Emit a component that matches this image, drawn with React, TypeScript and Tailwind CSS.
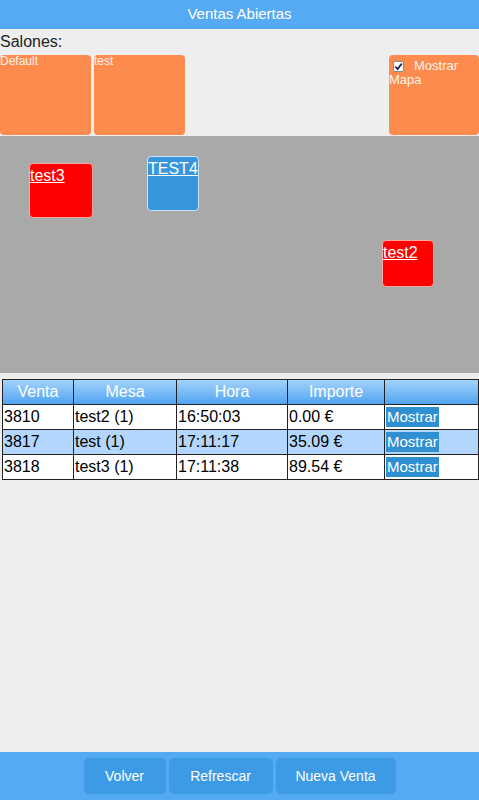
import React from "react";

const ventas = [
  { id: "3810", mesa: "test2 (1)", hora: "16:50:03", importe: "0.00 €", alt: false },
  { id: "3817", mesa: "test (1)", hora: "17:11:17", importe: "35.09 €", alt: true },
  { id: "3818", mesa: "test3 (1)", hora: "17:11:38", importe: "89.54 €", alt: false },
];

export default function App() {
  return (
    <div className="flex h-screen flex-col bg-[#eeeeee] font-['Liberation_Sans',Arial,sans-serif] text-black">
      <div className="flex h-[29px] items-center justify-center bg-[#55aaf4] text-[15px] text-white">
        Ventas Abiertas
      </div>

      <div className="pt-[4px] text-[16px] leading-[18px] text-[#222]">Salones:</div>

      <div className="mt-[4px] flex h-[80px]">
        <div className="w-[91px] rounded-[4px] bg-[#fd8b4d] text-[12px] leading-[13px] text-[#fff3e8]">Default</div>
        <div className="ml-[3px] w-[91px] rounded-[4px] bg-[#fd8b4d] text-[12px] leading-[13px] text-[#fff3e8]">test</div>
        <div className="flex-1" />
        <div className="w-[90px] rounded-[4px] bg-[#fd8b4d] pt-[4px] text-[13px] leading-[14px] text-[#fff3e8]">
          <span className="ml-[4px] mr-[10px] inline-flex h-[11px] w-[11px] items-center justify-center rounded-[2px] border border-[#888] bg-white align-[-1px]">
            <svg viewBox="0 0 10 10" className="h-[9px] w-[9px]">
              <path d="M1.5 5.2 L4 7.8 L8.6 1.8" fill="none" stroke="#1b2a4a" strokeWidth="2" />
            </svg>
          </span>
          Mostrar
          <br />
          Mapa
        </div>
      </div>

      <div className="relative mt-[1px] h-[237px] bg-[#a9a9a9]">
        <div className="absolute left-[29px] top-[27px] h-[55px] w-[64px] rounded-[4px] border border-[#f8a8a0] bg-[#ff0000]">
          <span className="text-[16px] leading-[17px] text-white underline">test3</span>
        </div>
        <div className="absolute left-[147px] top-[20px] h-[55px] w-[52px] rounded-[4px] border border-[#c8e4ff] bg-[#3796dc]">
          <span className="text-[16px] leading-[17px] text-white underline">TEST4</span>
        </div>
        <div className="absolute left-[382px] top-[104px] h-[47px] w-[52px] rounded-[4px] border border-[#f8a8a0] bg-[#ff0000]">
          <span className="text-[16px] leading-[17px] text-white underline">test2</span>
        </div>
      </div>

      <table className="ml-[2px] mt-[6px] w-[477px] border-collapse border border-[#222] text-[16px] leading-[18px]">
        <thead>
          <tr className="h-[25px] bg-gradient-to-b from-[#a4d2fa] to-[#4ba2f2] text-white">
            <th className="w-[71px] border border-[#222] font-normal">Venta</th>
            <th className="w-[103px] border border-[#222] font-normal">Mesa</th>
            <th className="w-[111px] border border-[#222] font-normal">Hora</th>
            <th className="w-[97px] border border-[#222] font-normal">Importe</th>
            <th className="border border-[#222] font-normal"></th>
          </tr>
        </thead>
        <tbody>
          {ventas.map((v) => (
            <tr key={v.id} className={`h-[25px] ${v.alt ? "bg-[#b3d7fc]" : "bg-white"}`}>
              <td className="border border-[#222] p-0 pl-[1px]">{v.id}</td>
              <td className="border border-[#222] p-0 pl-[1px]">{v.mesa}</td>
              <td className="border border-[#222] p-0 pl-[1px]">{v.hora}</td>
              <td className="border border-[#222] p-0 pl-[1px]">{v.importe}</td>
              <td className="border border-[#222] p-0 pl-[1px]">
                <span className="inline-block bg-[#2f8fd0] px-[1px] text-[15px] leading-[20px] text-white">Mostrar</span>
              </td>
            </tr>
          ))}
        </tbody>
      </table>

      <div className="flex-1" />

      <div className="flex h-[48px] items-center justify-center gap-[3px] bg-[#55aaf4]">
        <button className="h-[36px] w-[82px] rounded-[5px] bg-[#3d9be6] text-[14px] text-white">Volver</button>
        <button className="h-[36px] w-[104px] rounded-[5px] bg-[#3d9be6] text-[14px] text-white">Refrescar</button>
        <button className="h-[36px] w-[120px] rounded-[5px] bg-[#3d9be6] text-[14px] text-white">Nueva Venta</button>
      </div>
    </div>
  );
}
